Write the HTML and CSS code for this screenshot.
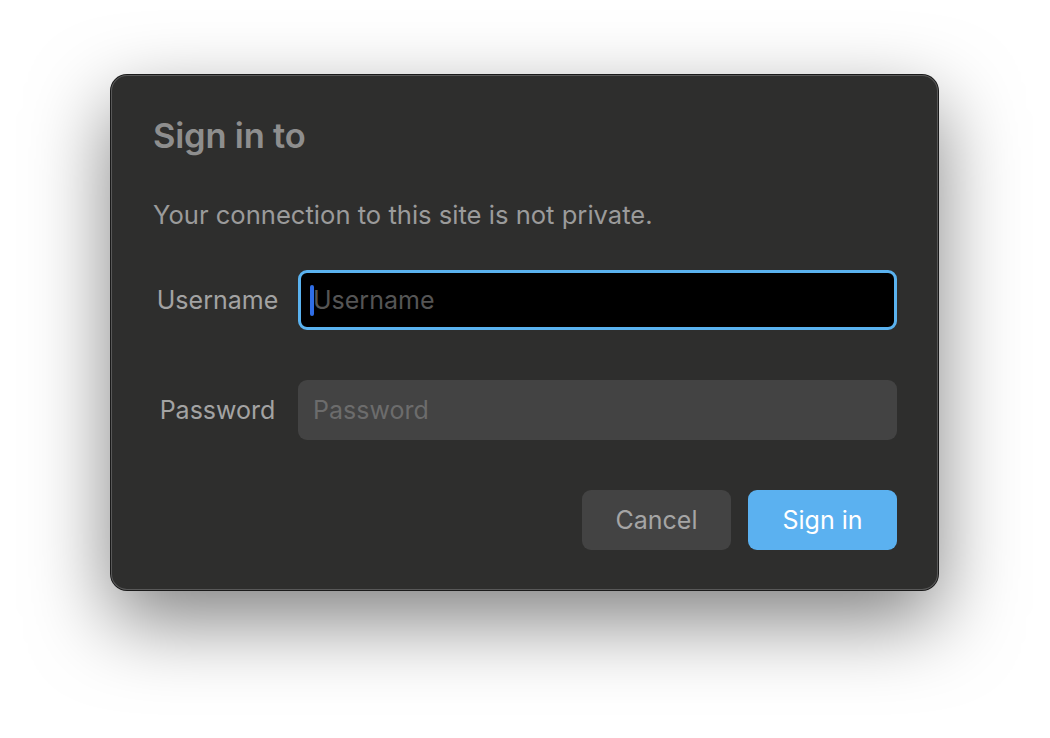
FILE: index.html
```html
<!DOCTYPE html>
<html>
<head>
<meta charset="utf-8">
<link rel="stylesheet" href="styles.css">
</head>
<body>
<div class="dialog">
  <h1 class="title">Sign in to</h1>
  <p class="subtitle">Your connection to this site is not private.</p>
  <div class="form">
    <label class="label">Username</label>
    <div class="field focused"><span class="caret"></span><span class="ph ph-dark">Username</span></div>
    <label class="label">Password</label>
    <div class="field"><span class="ph">Password</span></div>
  </div>
  <div class="actions">
    <button class="btn cancel">Cancel</button>
    <button class="btn primary">Sign in</button>
  </div>
</div>
</body>
</html>
```
FILE: styles.css
```css
html, body {
  margin: 0;
  padding: 0;
  background: #ffffff;
  width: 1050px;
  height: 738px;
  overflow: hidden;
}
body {
  font-family: Inter, "Noto Sans", sans-serif;
  padding-top: 75px;
  box-sizing: border-box;
}
.dialog {
  width: 827px;
  height: 515px;
  margin-left: 111px;
  box-sizing: border-box;
  background: #2e2e2d;
  border-radius: 16px;
  padding: 39px 41px 0 42px;
  box-shadow: 0 0 0 1px #1a1a1a, inset 0 0 0 1px #585858, 0 30px 80px rgba(0,0,0,0.5);
}
.title {
  margin: 0;
  font-size: 34.5px;
  line-height: 44px;
  font-weight: 600;
  color: #8e8e8e;
  letter-spacing: -0.2px;
}
.subtitle {
  margin: 41px 0 0;
  font-size: 25.6px;
  line-height: 31px;
  color: #9b9b9b;
  letter-spacing: 0;
}
.form {
  margin-top: 40px;
  display: grid;
  grid-template-columns: 129px 1fr;
  column-gap: 16px;
  row-gap: 50px;
  align-items: center;
}
.label {
  text-align: center;
  font-size: 25px;
  color: #a3a3a3;
}
.field {
  height: 60px;
  box-sizing: border-box;
  border-radius: 9px;
  background: #434343;
  display: flex;
  align-items: center;
  padding-left: 15px;
  font-size: 25px;
}
.field.focused {
  background: #000;
  border: 3px solid #5ab2ef;
  padding-left: 9px;
}
.caret {
  width: 4px;
  height: 31px;
  border-radius: 2px;
  background: #2f6de6;
  margin-right: -1px;
}
.ph {
  color: #6c6c6c;
}
.ph-dark {
  color: #555555;
}
.actions {
  margin-top: 50px;
  display: flex;
  justify-content: flex-end;
  gap: 17px;
}
.btn {
  width: 149px;
  height: 60px;
  border: none;
  border-radius: 9px;
  font-family: Inter, "Noto Sans", sans-serif;
  font-size: 25px;
  padding: 0;
}
.cancel {
  background: #434343;
  color: #a5a5a5;
}
.primary {
  background: #5bb1f0;
  color: #ffffff;
}
```
